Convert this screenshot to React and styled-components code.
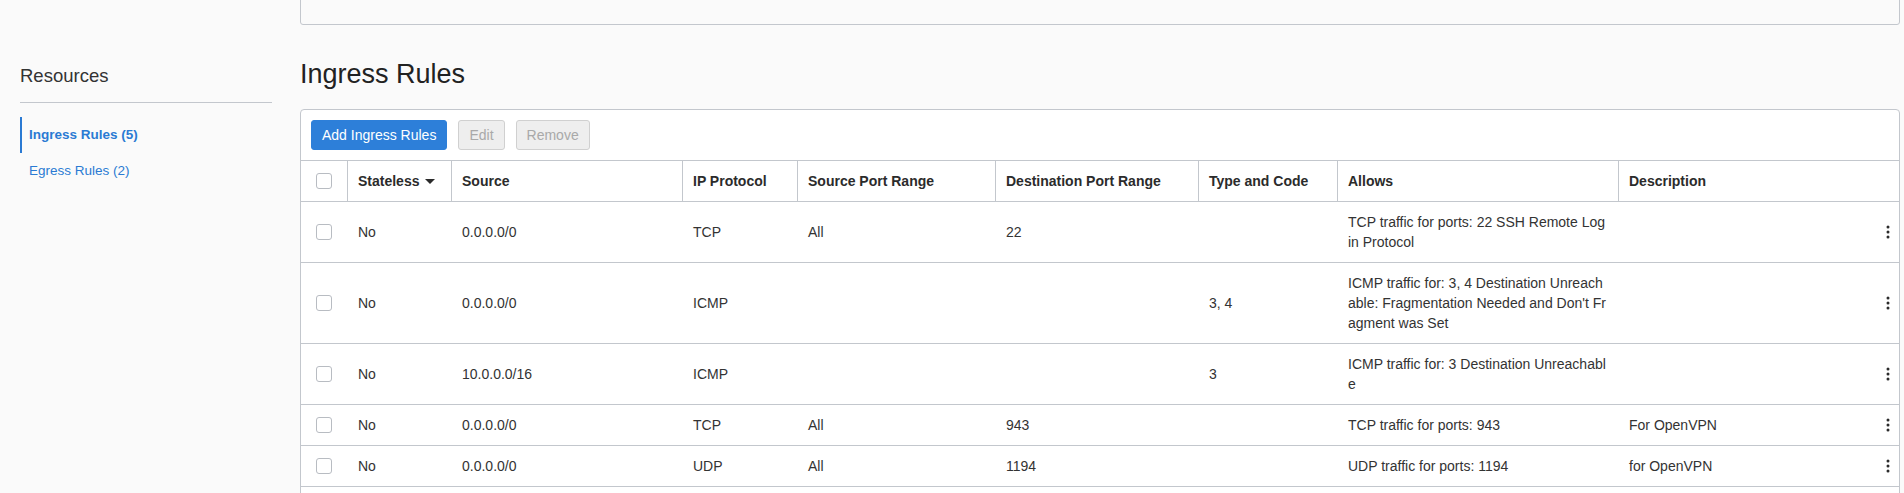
import styled, { createGlobalStyle } from 'styled-components';

const GlobalStyle = createGlobalStyle`
  html, body {
    margin: 0;
    padding: 0;
    background: #fafafa;
    font-family: 'Liberation Sans', Arial, sans-serif;
    color: #333333;
    overflow: hidden;
  }
  * {
    box-sizing: border-box;
  }
`;

const rules = [
  {
    stateless: 'No',
    source: '0.0.0.0/0',
    protocol: 'TCP',
    sourcePort: 'All',
    destPort: '22',
    typeCode: '',
    allows: 'TCP traffic for ports: 22 SSH Remote Login Protocol',
    description: '',
  },
  {
    stateless: 'No',
    source: '0.0.0.0/0',
    protocol: 'ICMP',
    sourcePort: '',
    destPort: '',
    typeCode: '3, 4',
    allows:
      "ICMP traffic for: 3, 4 Destination Unreachable: Fragmentation Needed and Don't Fragment was Set",
    description: '',
  },
  {
    stateless: 'No',
    source: '10.0.0.0/16',
    protocol: 'ICMP',
    sourcePort: '',
    destPort: '',
    typeCode: '3',
    allows: 'ICMP traffic for: 3 Destination Unreachable',
    description: '',
  },
  {
    stateless: 'No',
    source: '0.0.0.0/0',
    protocol: 'TCP',
    sourcePort: 'All',
    destPort: '943',
    typeCode: '',
    allows: 'TCP traffic for ports: 943',
    description: 'For OpenVPN',
  },
  {
    stateless: 'No',
    source: '0.0.0.0/0',
    protocol: 'UDP',
    sourcePort: 'All',
    destPort: '1194',
    typeCode: '',
    allows: 'UDP traffic for ports: 1194',
    description: 'for OpenVPN',
  },
];

// column widths in px, table is 1598 wide
const columns = [46, 104, 231, 115, 198, 203, 139, 281, 259, 22];

const KebabIcon = () => (
  <svg width="4" height="14" viewBox="0 0 4 14">
    <circle cx="2" cy="2" r="1.5" fill="#2b2b2b" />
    <circle cx="2" cy="7" r="1.5" fill="#2b2b2b" />
    <circle cx="2" cy="12" r="1.5" fill="#2b2b2b" />
  </svg>
);

const SortCaret = () => (
  <svg width="10" height="5" viewBox="0 0 10 5">
    <path d="M0 0 L10 0 L5 5 Z" fill="#2b2b2b" />
  </svg>
);

const App = () => {
  return (
    <>
      <GlobalStyle />
      <Page>
        <Sidebar>
          <SideTitle>Resources</SideTitle>
          <SideNav>
            <SideLink $active>Ingress Rules (5)</SideLink>
            <SideLink>Egress Rules (2)</SideLink>
          </SideNav>
        </Sidebar>
        <Main>
          <TopBox />
          <Heading>Ingress Rules</Heading>
          <Panel>
            <Toolbar>
              <Button $primary>Add Ingress Rules</Button>
              <Button disabled>Edit</Button>
              <Button disabled>Remove</Button>
            </Toolbar>
            <Table>
              <colgroup>
                {columns.map((w, i) => (
                  <col key={i} style={{ width: w }} />
                ))}
              </colgroup>
              <thead>
                <tr>
                  <Th $first $center>
                    <Checkbox />
                  </Th>
                  <Th>
                    <SortLabel>
                      Stateless
                      <SortCaret />
                    </SortLabel>
                  </Th>
                  <Th>Source</Th>
                  <Th>IP Protocol</Th>
                  <Th>Source Port Range</Th>
                  <Th>Destination Port Range</Th>
                  <Th>Type and Code</Th>
                  <Th>Allows</Th>
                  <Th>Description</Th>
                  <Th $first />
                </tr>
              </thead>
              <tbody>
                {rules.map((r, i) => (
                  <tr key={i}>
                    <Td $center>
                      <Checkbox />
                    </Td>
                    <Td>{r.stateless}</Td>
                    <Td>{r.source}</Td>
                    <Td>{r.protocol}</Td>
                    <Td>{r.sourcePort}</Td>
                    <Td>{r.destPort}</Td>
                    <Td>{r.typeCode}</Td>
                    <Td $wrap>{r.allows}</Td>
                    <Td>{r.description}</Td>
                    <Td $center>
                      <KebabIcon />
                    </Td>
                  </tr>
                ))}
              </tbody>
            </Table>
          </Panel>
        </Main>
      </Page>
    </>
  );
};

const Page = styled.div`
  display: flex;
  align-items: flex-start;
  gap: 28px;
  padding-left: 20px;
  padding-right: 4px;
  height: 493px;
  overflow: hidden;
`;

const Sidebar = styled.div`
  width: 252px;
  flex-shrink: 0;
  padding-top: 64px;
`;

const SideTitle = styled.div`
  font-size: 18.5px;
  line-height: 24px;
  color: #333333;
  padding-bottom: 14px;
  border-bottom: 1px solid #c3c7cd;
`;

const SideNav = styled.div`
  display: flex;
  flex-direction: column;
  margin-top: 14px;
`;

const SideLink = styled.a`
  display: block;
  font-size: 13.5px;
  line-height: 20px;
  padding: 8px 0 8px 7px;
  color: #2a7ad3;
  font-weight: ${(p) => (p.$active ? 700 : 400)};
  border-left: 2px solid ${(p) => (p.$active ? '#2a7ad3' : 'transparent')};
  cursor: pointer;
`;

const Main = styled.div`
  flex: 1;
  min-width: 0;
`;

const TopBox = styled.div`
  height: 35px;
  margin-top: -10px;
  border: 1px solid #c3c7cd;
  border-radius: 3px;
`;

const Heading = styled.h1`
  margin: 33px 0 19px;
  font-size: 27px;
  line-height: 32px;
  font-weight: 400;
  color: #222222;
`;

const Panel = styled.div`
  background: #ffffff;
  border: 1px solid #c3c7cd;
  border-radius: 4px;
  padding-bottom: 60px;
`;

const Toolbar = styled.div`
  display: flex;
  gap: 11px;
  padding: 10px;
  border-bottom: 1px solid #c3c7cd;
`;

const Button = styled.button`
  height: 30px;
  padding: 0 10px;
  font-family: 'Liberation Sans', Arial, sans-serif;
  font-size: 14px;
  border-radius: 3px;
  border: 1px solid ${(p) => (p.$primary ? '#2d7fd9' : '#d0d0d0')};
  background: ${(p) => (p.$primary ? '#2d7fd9' : '#eeeeee')};
  color: ${(p) => (p.$primary ? '#ffffff' : '#a9a9a9')};
  cursor: ${(p) => (p.disabled ? 'default' : 'pointer')};
`;

const Table = styled.table`
  width: 1598px;
  table-layout: fixed;
  border-collapse: separate;
  border-spacing: 0;
`;

const Th = styled.th`
  text-align: ${(p) => (p.$center ? 'center' : 'left')};
  font-size: 14px;
  font-weight: 700;
  line-height: 20px;
  color: #2b2b2b;
  padding: ${(p) => (p.$center ? '10px 0' : '10px 10px')};
  border-left: ${(p) => (p.$first ? 'none' : '1px solid #c3c7cd')};
  border-bottom: 1px solid #c3c7cd;
  vertical-align: middle;
  white-space: nowrap;
`;

const SortLabel = styled.span`
  display: inline-flex;
  align-items: center;
  gap: 6px;
`;

const Td = styled.td`
  text-align: ${(p) => (p.$center ? 'center' : 'left')};
  font-size: 14px;
  line-height: 20px;
  color: #333333;
  padding: ${(p) => (p.$center ? '10px 0' : '10px 11px')};
  border-bottom: 1px solid #c3c7cd;
  vertical-align: middle;
  word-break: ${(p) => (p.$wrap ? 'break-all' : 'normal')};
  svg {
    display: block;
    margin: 0 auto;
  }
`;

const Checkbox = styled.span`
  display: block;
  width: 16px;
  height: 16px;
  margin: 0 auto;
  border: 1px solid #b8bcc2;
  border-radius: 3px;
  background: #ffffff;
`;

export default App;
